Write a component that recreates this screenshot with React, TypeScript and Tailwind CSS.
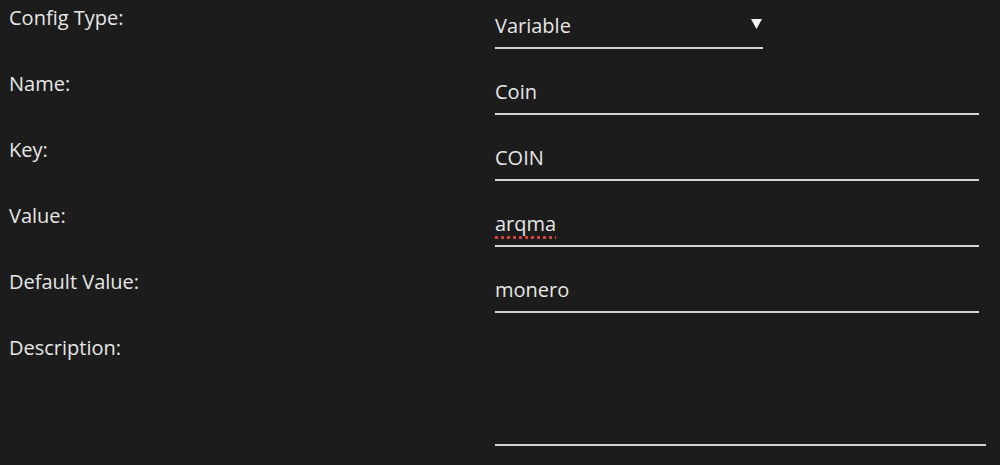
import React from "react"

const FONT = { fontFamily: '"Open Sans", "Noto Sans", sans-serif' }

function Label({ children }: { children: React.ReactNode }) {
  return (
    <div className="w-[486px] shrink-0 pt-[5px] text-[20px] leading-[26px] text-[#e6e6e6]">
      {children}
    </div>
  )
}

function Field({
  value,
  width = "w-[484px]",
  misspelled = false,
}: {
  value: string
  width?: string
  misspelled?: boolean
}) {
  return (
    <div
      className={`${width} mt-[4px] h-[45px] flex items-center border-b-2 border-[#d2d2d2] text-[20px] text-[#e6e6e6]`}
    >
      <span
        className={
          misspelled
            ? "underline decoration-dotted decoration-[#d0443a] decoration-[3px] underline-offset-[5px]"
            : ""
        }
      >
        {value}
      </span>
    </div>
  )
}

export default function App() {
  return (
    <div className="w-[1000px] h-[465px] bg-[#1c1c1c] pl-[9px] overflow-hidden" style={FONT}>
      <div className="flex h-[66px]">
        <Label>Config Type:</Label>
        <div className="w-[268px] mt-[4px] h-[45px] flex items-center justify-between border-b-2 border-[#d2d2d2] text-[20px] text-[#e6e6e6]">
          <span>Variable</span>
          <svg width="11" height="10" viewBox="0 0 11 10" className="mr-[1px] mb-[4px]">
            <polygon points="0,0 11,0 5.5,10" fill="#f2f2f2" />
          </svg>
        </div>
      </div>
      <div className="flex h-[66px]">
        <Label>Name:</Label>
        <Field value="Coin" />
      </div>
      <div className="flex h-[66px]">
        <Label>Key:</Label>
        <Field value="COIN" />
      </div>
      <div className="flex h-[66px]">
        <Label>Value:</Label>
        <Field value="arqma" misspelled />
      </div>
      <div className="flex h-[66px]">
        <Label>Default Value:</Label>
        <Field value="monero" />
      </div>
      <div className="flex">
        <Label>Description:</Label>
        <div className="w-[491px] h-[116px] border-b-2 border-[#d2d2d2]" />
      </div>
    </div>
  )
}
